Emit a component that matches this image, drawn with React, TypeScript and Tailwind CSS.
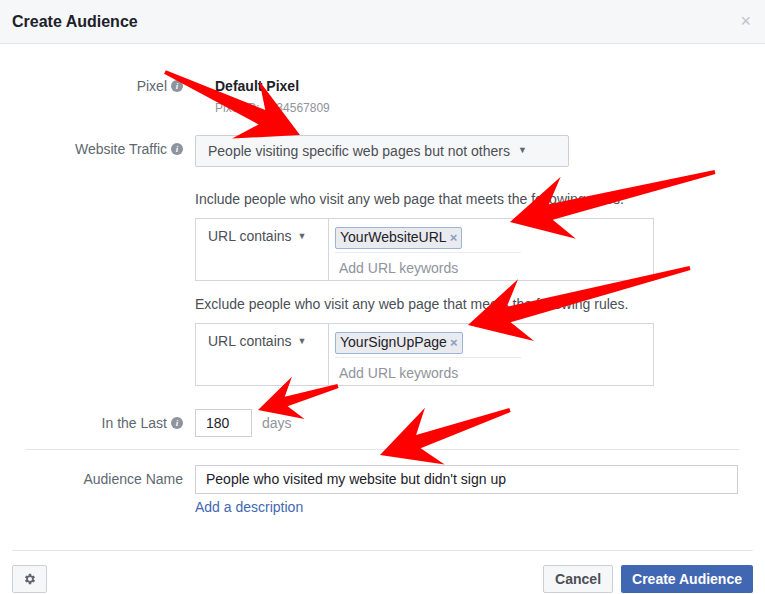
import React from "react";

const Info = () => (
  <span className="inline-flex items-center justify-center w-[12px] h-[12px] rounded-full bg-[#8d949e] text-white text-[9px] font-bold italic ml-[4px] leading-none" style={{ fontFamily: "Liberation Serif, serif" }}>i</span>
);

function arrow(tx: number, ty: number, hx: number, hy: number, w = 8, hl = 60, hw = 32) {
  const dx = hx - tx, dy = hy - ty;
  const L = Math.hypot(dx, dy);
  const ux = dx / L, uy = dy / L, px = -uy, py = ux;
  const bx = hx - ux * hl, by = hy - uy * hl;
  const nx = hx - ux * (hl * 0.7), ny = hy - uy * (hl * 0.7);
  const pts = [
    [tx + px * 2, ty + py * 2],
    [nx + px * w, ny + py * w],
    [bx + px * hw, by + py * hw],
    [hx, hy],
    [bx - px * hw, by - py * hw],
    [nx - px * w, ny - py * w],
    [tx - px * 2, ty - py * 2],
  ];
  return pts.map((p) => p.join(",")).join(" ");
}

const Rule = ({ label, chip }: { label: string; chip: string }) => (
  <div className="flex border border-[#d3d6db] w-[459px] h-[63px] bg-white">
    <div className="w-[133px] border-r border-[#d3d6db] pl-[12px] pt-[7px] text-[14px] text-[#4b4f56] flex items-start gap-[6px]">
      {label} <span className="text-[9px] mt-[4px] text-[#606770]">▼</span>
    </div>
    <div className="flex-1 pl-[6px] pt-[6px]">
      <div className="w-[186px] border-b border-[#e9ebee] pb-[3px]">
        <span className="inline-flex items-center h-[22px] px-[4px] border border-[#9cb4d8] bg-[#e9ebee] rounded-[2px] text-[14px] text-[#1d2129]">
          {chip} <span className="text-[#8b9dc3] text-[13px] ml-[3px] font-bold">×</span>
        </span>
      </div>
      <div className="text-[14px] text-[#90949c] mt-[5px] pl-[4px]">Add URL keywords</div>
    </div>
  </div>
);

export default function App() {
  return (
    <div className="relative w-[765px] h-[594px] bg-white overflow-hidden text-[#4b4f56]" style={{ fontFamily: "'Liberation Sans', Arial, sans-serif" }}>
      <div className="h-[44px] bg-[#f6f7f9] border-b border-[#e5e5e5] flex items-center justify-between px-[12px]">
        <span className="text-[16px] font-bold text-[#1d2129]">Create Audience</span>
        <span className="text-[#bec2c9] text-[18px] mr-[2px]">×</span>
      </div>
      <div className="pt-[33px]">
        <div className="flex">
          <div className="w-[183px] flex justify-end items-center h-[18px] text-[14px] text-[#606770]">Pixel <Info /></div>
          <div className="pl-[32px]">
            <div className="text-[14px] font-bold text-[#1d2129] leading-[18px]">Default Pixel</div>
            <div className="text-[12px] text-[#90949c] mt-[4px]">Pixel ID: 1234567809</div>
          </div>
        </div>
        <div className="flex mt-[18px] items-start">
          <div className="w-[183px] flex justify-end items-center h-[28px] text-[14px] text-[#606770]">Website Traffic <Info /></div>
          <div className="pl-[12px]">
            <div className="h-[32px] w-[374px] border border-[#ccd0d5] bg-[#f6f7f9] rounded-[2px] flex items-center pl-[12px] gap-[8px] text-[14px] text-[#4b4f56]">
              People visiting specific web pages but not others <span className="text-[9px] text-[#606770]">▼</span>
            </div>
            <div className="text-[14px] text-[#4b4f56] mt-[22px] mb-[8px]">Include people who visit any web page that meets the following rules.</div>
            <Rule label="URL contains" chip="YourWebsiteURL" />
            <div className="text-[14px] text-[#4b4f56] mt-[13px] mb-[8px]">Exclude people who visit any web page that meets the following rules.</div>
            <Rule label="URL contains" chip="YourSignUpPage" />
          </div>
        </div>
        <div className="flex mt-[23px] items-center">
          <div className="w-[183px] flex justify-end items-center text-[14px] text-[#606770]">In the Last <Info /></div>
          <div className="pl-[12px] flex items-center">
            <div className="w-[57px] h-[28px] border border-[#ccd0d5] flex items-center pl-[10px] text-[14px] text-[#1d2129]">180</div>
            <span className="ml-[10px] text-[14px] text-[#90949c]">days</span>
          </div>
        </div>
        <div className="mx-[26px] border-t border-[#e5e5e5] mt-[12px]" />
        <div className="flex mt-[15px] items-start">
          <div className="w-[183px] flex justify-end items-center h-[29px] text-[14px] text-[#606770]">Audience Name</div>
          <div className="pl-[12px]">
            <div className="w-[543px] h-[29px] border border-[#ccd0d5] flex items-center pl-[10px] text-[14px] text-[#1d2129]">People who visited my website but didn't sign up</div>
            <div className="text-[14px] text-[#4267b2] mt-[3px]">Add a description</div>
          </div>
        </div>
        <div className="mx-[12px] border-t border-[#e5e5e5] mt-[32px]" />
        <div className="flex justify-between mx-[12px] mt-[14px]">
          <div className="w-[35px] h-[28px] border border-[#ccd0d5] bg-[#f6f7f9] rounded-[2px] flex items-center justify-center">
            <svg width="14" height="14" viewBox="0 0 24 24" fill="#606770"><path d="M19.4 13a7.5 7.5 0 000-2l2.1-1.6-2-3.5-2.5 1a7 7 0 00-1.7-1L15 3h-4l-.4 2.9a7 7 0 00-1.7 1l-2.5-1-2 3.5L6.5 11a7.5 7.5 0 000 2l-2.1 1.6 2 3.5 2.5-1a7 7 0 001.7 1L11 21h4l.4-2.9a7 7 0 001.7-1l2.5 1 2-3.5zM13 15.5a3.5 3.5 0 110-7 3.5 3.5 0 010 7z" transform="translate(-1 0)"/></svg>
          </div>
          <div className="flex gap-[8px]">
            <div className="h-[28px] px-[11px] border border-[#ccd0d5] bg-[#f6f7f9] rounded-[2px] flex items-center text-[14px] font-bold text-[#4b4f56]">Cancel</div>
            <div className="h-[28px] px-[11px] bg-[#4267b2] rounded-[2px] flex items-center text-[14px] font-bold text-white">Create Audience</div>
          </div>
        </div>
      </div>
      <svg className="absolute inset-0 pointer-events-none" width="765" height="594">
        <g fill="#ff0000">
          <polygon points={arrow(165, 72, 300, 135)} />
          <polygon points={arrow(715, 172, 510, 222)} />
          <polygon points={arrow(690, 268, 468, 325)} />
          <polygon points={arrow(338, 386, 258, 410, 5, 42, 22)} />
          <polygon points={arrow(510, 410, 380, 455, 7, 58, 30)} />
        </g>
      </svg>
    </div>
  );
}
